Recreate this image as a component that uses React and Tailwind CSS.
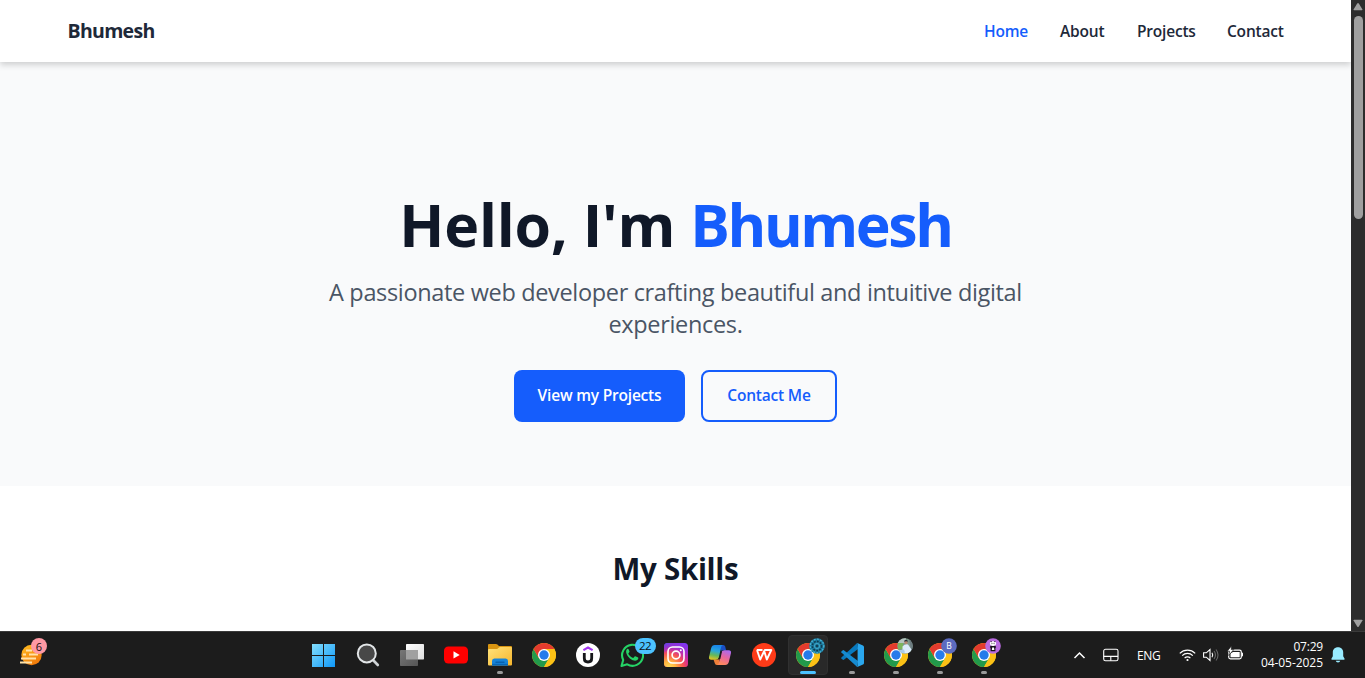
import React from "react";

const navItems = [
  { label: "Home", cls: "w-[44px] text-[#155dfc]" },
  { label: "About", cls: "w-[45px] text-[#1e2939]" },
  { label: "Projects", cls: "w-[58px] text-[#1e2939]" },
  { label: "Contact", cls: "w-[57px] text-[#1e2939]" },
];

function Navbar() {
  return (
    <header className="relative z-10 flex h-[62px] shrink-0 items-center justify-between bg-white pr-[67px] pl-[67.5px] shadow-[0_3px_6px_rgba(0,0,0,0.17)]">
      <div className="text-[19.5px] leading-7 font-bold tracking-[-0.7px] text-[#1e2939]">Bhumesh</div>
      <nav className="flex gap-8 text-[15.5px] leading-6 font-semibold tracking-[-0.2px] whitespace-nowrap">
        {navItems.map((n) => (
          <a key={n.label} className={n.cls}>{n.label}</a>
        ))}
      </nav>
    </header>
  );
}

function Hero() {
  return (
    <section className="flex h-[424px] shrink-0 flex-col items-center bg-[#f9fafb] pt-[132px] text-center">
      <h1 className="text-[59px] leading-[60px] font-bold tracking-[-0.2px] whitespace-nowrap text-[#101828]">
        Hello, I'm <span className="tracking-[-2.4px] text-[#155dfc]">Bhumesh</span>
      </h1>
      <p className="mt-[22px] text-[23.5px] leading-8 tracking-[-0.34px] whitespace-nowrap text-[#4a5565]">
        A passionate web developer crafting beautiful and intuitive digital
        <br />
        experiences.
      </p>
      <div className="mt-[30px] flex gap-4 text-[15.5px] font-semibold tracking-[-0.2px] whitespace-nowrap">
        <button className="h-[52px] w-[171px] rounded-lg bg-[#155dfc] text-white">View my Projects</button>
        <button className="h-[52px] w-[136px] rounded-lg border-2 border-[#155dfc] text-[#155dfc]">Contact Me</button>
      </div>
    </section>
  );
}

function Scrollbar() {
  return (
    <div className="flex w-[14px] shrink-0 flex-col items-center bg-[#2c2c2c]">
      <svg className="mt-[2px] h-[10px] w-[10px]" viewBox="0 0 10 10"><path d="M.5 7.5 4.2 1.6Q5 .6 5.8 1.6L9.5 7.5Q9.5 8.2 8.8 8.2H1.2Q.5 8.2 .5 7.5Z" fill="#9f9f9f" /></svg>
      <div className="mt-[4px] h-[203px] w-[9px] rounded-full bg-[#9f9f9f]" />
      <svg className="mt-auto mb-[3px] h-[10px] w-[10px]" viewBox="0 0 10 10"><path d="M.5 2.5 4.2 8.4Q5 9.4 5.8 8.4L9.5 2.5Q9.5 1.8 8.8 1.8H1.2Q.5 1.8 .5 2.5Z" fill="#9f9f9f" /></svg>
    </div>
  );
}

function Windows() {
  return (
    <svg width="24" height="24" viewBox="0 0 24 24">
      <defs><linearGradient id="win" x1="0" y1="0" x2="24" y2="24" gradientUnits="userSpaceOnUse"><stop stopColor="#86e0fd" /><stop offset="1" stopColor="#0c96f8" /></linearGradient></defs>
      <path d="M0 1h11v11H0zM12 1h11v11H12zM0 13h11v11H0zM12 13h11v11H12z" fill="url(#win)" />
    </svg>
  );
}

function Search() {
  return (
    <svg width="24" height="24" viewBox="0 0 24 24">
      <path d="m17 17 4.8 5" stroke="#cfd3d6" strokeWidth="2.6" strokeLinecap="round" />
      <circle cx="10.8" cy="10.4" r="9" fill="#484848" stroke="#e2e5e7" strokeWidth="2" />
    </svg>
  );
}

function TaskView() {
  return (
    <svg width="24" height="24" viewBox="0 0 24 24">
      <defs>
        <linearGradient id="tv1" x1="0" y1="0" x2="1" y2="1"><stop stopColor="#fff" /><stop offset="1" stopColor="#dedede" /></linearGradient>
        <linearGradient id="tv2" x1="0" y1="0" x2="1" y2="1"><stop stopColor="#777" /><stop offset="1" stopColor="#555" /></linearGradient>
      </defs>
      <rect x="6" y="1" width="18" height="15.5" rx=".7" fill="url(#tv1)" />
      <rect y="7" width="18" height="16" rx=".7" fill="url(#tv2)" />
      <path d="M6 7h12v9.5H6z" fill="#a0a0a0" />
    </svg>
  );
}

function YouTube() {
  return (
    <svg width="24" height="24" viewBox="0 0 24 24">
      <rect y="3.4" width="24" height="17" rx="4.2" fill="#f00" />
      <path d="m9.5 8.3 6.2 3.6-6.2 3.6z" fill="#fff" />
    </svg>
  );
}

function Folder() {
  return (
    <svg width="24" height="24" viewBox="0 0 24 24">
      <defs><linearGradient id="fold" x1="0" y1="0" x2="1" y2="1"><stop stopColor="#ffe37b" /><stop offset="1" stopColor="#f6b52d" /></linearGradient></defs>
      <path d="M0 2q0-1 1-1h7q.8 0 1.4.6L11 3h12q1 0 1 1v8H0z" fill="#d99511" />
      <path d="M0 7q0-1 1-1h7.5q.7 0 1.3-.5l1.5-1.2Q12 4 12.7 4H23q1 0 1 1v16.5q0 1-1 1H1q-1 0-1-1z" fill="url(#fold)" />
      <path d="M4 22.5V18q0-2.5 2.3-2.5h11.4q2.3 0 2.3 2.5v4.5z" fill="#1683d8" />
      <path d="M8 19.2h8" stroke="#0861ad" strokeWidth="1.4" strokeLinecap="round" />
      <path d="M4 20.8h16v1.7H4z" fill="#0866b6" />
    </svg>
  );
}

function Chrome({ children }) {
  return (
    <svg width="34" height="34" viewBox="-5 -5 34 34">
      <circle cx="12" cy="12" r="12" fill="#fbc116" />
      <path d="M1.61 6A12 12 0 0 0 12 24l5.2-9L12 12 6.8 15z" fill="#229a4b" />
      <path d="M22.39 6A12 12 0 0 1 12 24l5.2-9L15 6.5z" fill="#fbc116" />
      <path d="M1.61 6A12 12 0 0 1 22.39 6H12L6.8 15z" fill="#e33b2e" />
      <circle cx="12" cy="12" r="6" fill="#fff" />
      <circle cx="12" cy="12" r="4.7" fill="#267bea" />
      {children}
    </svg>
  );
}

function Udemy() {
  return (
    <svg width="24" height="24" viewBox="0 0 24 24">
      <circle cx="12" cy="12" r="12" fill="#fff" />
      <path d="M7.4 7.1 12 4.6l4.6 2.5" fill="none" stroke="#a435f0" strokeWidth="2.2" />
      <path d="M8.3 10v5.2q0 3.8 3.7 3.8t3.7-3.8V10" fill="none" stroke="#16171a" strokeWidth="2.8" />
    </svg>
  );
}

function WhatsApp() {
  return (
    <svg width="24" height="24" viewBox="0 0 24 24">
      <path d="m1.5 23 1.7-6A10.5 10.5 0 1 1 7.2 21.3z" fill="none" stroke="#25d366" strokeWidth="2.1" strokeLinejoin="round" />
      <path d="M8.7 6.4c-.5-.9-1.1-.8-1.6-.3-4 4 5.3 14.5 10.2 11 1.1-.8 1.3-2.2.8-2.5l-2.7-1.3c-.5-.2-.8 0-1.1.4l-.8 1c-.3.3-.6.3-1 .1-2-.9-3.3-2.3-4.1-3.8-.2-.4 0-.7.3-1l.7-.9c.2-.3.1-.6 0-.9z" fill="#25d366" />
    </svg>
  );
}

function Instagram() {
  return (
    <svg width="24" height="24" viewBox="0 0 24 24">
      <defs>
        <linearGradient id="ig" x1="1" y1="0" x2=".75" y2="1"><stop stopColor="#7638fa" /><stop offset=".4" stopColor="#a52ccb" /><stop offset=".75" stopColor="#d02a98" /><stop offset="1" stopColor="#e8307c" /></linearGradient>
        <radialGradient id="ig2" cx=".2" cy="1.05" r=".95"><stop stopColor="#ffe15c" /><stop offset=".3" stopColor="#ffb540" /><stop offset=".65" stopColor="#fd5949" stopOpacity=".85" /><stop offset="1" stopColor="#d6249f" stopOpacity="0" /></radialGradient>
        <linearGradient id="ig3" x1="0" y1="0" x2=".7" y2=".5"><stop stopColor="#514de8" /><stop offset=".5" stopColor="#8336ce" stopOpacity=".4" /><stop offset="1" stopColor="#a02ad0" stopOpacity="0" /></linearGradient>
      </defs>
      <rect width="24" height="24" rx="3.5" fill="url(#ig)" />
      <rect width="24" height="24" rx="3.5" fill="url(#ig2)" />
      <path d="M0 9V3.5Q0 0 3.5 0H20L0 9Z" fill="url(#ig3)" />
      <rect x="4" y="4" width="16" height="16" rx="4.5" fill="none" stroke="#fff" strokeWidth="1.6" />
      <circle cx="12" cy="12" r="3.9" fill="none" stroke="#fff" strokeWidth="1.7" />
      <circle cx="16.8" cy="7.2" r="1" fill="#fff" />
    </svg>
  );
}

function Copilot() {
  return (
    <svg width="24" height="24" viewBox="0 0 24 24">
      <defs>
        <linearGradient id="co1" x1=".3" y1="0" x2=".1" y2="1"><stop stopColor="#1a86e8" /><stop offset=".35" stopColor="#28a7dd" /><stop offset=".65" stopColor="#65b85b" /><stop offset="1" stopColor="#f5c51c" /></linearGradient>
        <linearGradient id="co2" x1=".8" y1="0" x2=".4" y2="1"><stop stopColor="#a76af5" /><stop offset=".5" stopColor="#e8669f" /><stop offset="1" stopColor="#ff8a5c" /></linearGradient>
      </defs>
      <path d="M11.500 2h3.800q1.500 0 1.900 1.500l1 4h-5.500z" fill="#1a4fc4" />
      <path d="M5.500 16.500h5.500l.5 5.500H9.200q-1.800 0-2.300-1.500z" fill="#f0803a" />
      <path d="M6.800 2H15q-1.500.3-1.900 2.200L10.900 14.200q-.6 2.600-3.400 2.600H3.200Q.6 16.800 1 14L3.200 5Q4 2 6.800 2z" fill="url(#co1)" />
      <path d="M17.200 22H9q1.500-.3 1.900-2.200L13.100 9.800q.6-2.600 3.400-2.600h4.300q2.600 0 2.200 2.800L20.800 19q-.8 3-3.600 3z" fill="url(#co2)" />
      <path d="M12.900 8.500h1.100l-1.700 7.500h-1.300z" fill="#1c1c1c" />
    </svg>
  );
}

function Wps() {
  return (
    <svg width="24" height="24" viewBox="0 0 24 24">
      <circle cx="12" cy="12" r="12" fill="#ff3b18" />
      <path d="M4.8 7h5.7M5 7l3.2 9.5L12.2 8l2.6 8.5L19.3 7h-6.5l-.6 1" fill="none" stroke="#fff" strokeWidth="1.9" strokeLinejoin="round" />
    </svg>
  );
}

function Code() {
  return (
    <svg width="24" height="24" viewBox="0 0 24 24">
      <path d="m17.2 0-15.8 14.5q-.5.5 0 1l1.4 1.2q.5.4 1 .1L18 6z" fill="#0879be" />
      <path d="M17.2 24 1.4 9.5q-.5-.5 0-1l1.4-1.2q.5-.4 1-.1L18 18z" fill="#168bd1" />
      <path d="M17.3 24q-.7.2-1.3-.4 1.6 1 1.6-1V1.4q0-2-1.6-1 .6-.6 1.3-.4L23 2.5q1 .5 1 1.5v16q0 1-1 1.500z" fill="#2aa7ee" />
    </svg>
  );
}

function TurbineBadge() {
  return (
    <g>
      <circle cx="21" cy="3" r="7.8" fill="#1c7ca0" />
      <circle cx="21" cy="3" r="6.8" fill="none" stroke="#4fb6d6" strokeWidth="1.2" strokeDasharray="1.6 1.6" />
      <circle cx="21" cy="3" r="4.6" fill="none" stroke="#103b50" strokeWidth="1.6" strokeDasharray="1.8 1.2" />
      <circle cx="21" cy="3" r="2.6" fill="none" stroke="#3fa5c8" strokeWidth="1" />
      <circle cx="21" cy="3" r="1.3" fill="#123f54" />
    </g>
  );
}

function PhotoBadge() {
  return (
    <g>
      <clipPath id="photo"><circle cx="21" cy="3" r="7.8" /></clipPath>
      <g clipPath="url(#photo)">
        <path d="M12-6h18v18H12z" fill="#7d9a8a" />
        <path d="M13-6h9v6h-9z" fill="#b4c4bf" />
        <path d="M14 0h5v6h-5z" fill="#7cb45c" />
        <path d="M25-5h6v13h-4z" fill="#6c7b80" />
        <path d="M18.500 3.5Q21 .5 24 1.5l3.500 5-2 4h-7z" fill="#dcebfb" />
        <path d="m13 7.5 7-1 1 3-7 2z" fill="#a9cbe8" />
        <circle cx="22" cy="-.5" r="1.7" fill="#b98871" />
        <path d="M20-1.200q.3-2.200 2.200-2 2 .3 1.6 2l-1.6-.6z" fill="#293038" />
      </g>
    </g>
  );
}

function LetterBadge() {
  return (
    <g>
      <circle cx="21" cy="3" r="7.8" fill="#5c6bc0" />
      <text x="21" y="6.1" textAnchor="middle" fontSize="8.5" fontFamily="Open Sans" fill="#fff">B</text>
    </g>
  );
}

function PandaBadge() {
  return (
    <g>
      <circle cx="21" cy="3" r="7.8" fill="#b96be0" />
      <path d="M19 2.500h4l1.200 1.600-.8 1V8.200h-4.800V5.100l-.8-1z" fill="#17131b" />
      <path d="M20.200 4.600h1.800l.4 2.400h-2.600z" fill="#fff" />
      <ellipse cx="21" cy=".6" rx="3.100" ry="2.300" fill="#fff" />
      <path d="M18.600-1.600l1.200.4M23.400-1.600l-1.200.4M19.500.7l.9-.3M22.500.7l-.9-.3" stroke="#17131b" strokeWidth=".9" />
    </g>
  );
}

const apps = [
  { el: <Windows /> },
  { el: <Search /> },
  { el: <TaskView /> },
  { el: <YouTube /> },
  { el: <Folder />, open: true },
  { el: <Chrome /> },
  { el: <Udemy /> },
  { el: <WhatsApp />, count: "22" },
  { el: <Instagram /> },
  { el: <Copilot /> },
  { el: <Wps /> },
  { el: <Chrome><TurbineBadge /></Chrome>, active: true },
  { el: <Code />, open: true },
  { el: <Chrome><PhotoBadge /></Chrome>, open: true },
  { el: <Chrome><LetterBadge /></Chrome>, open: true },
  { el: <Chrome><PandaBadge /></Chrome>, open: true },
];

function AppButton({ app }) {
  return (
    <div className={app.active ? "relative flex h-10 w-10 items-center justify-center rounded-[4px] border border-[#303030] bg-[#292929]" : "relative flex h-10 w-10 items-center justify-center"}>
      {app.el}
      {app.count && <span className="absolute top-[3px] left-[23px] flex h-4 w-[21px] items-center justify-center rounded-full bg-[#4cc2ff] text-[11.5px] leading-none tracking-[-0.5px] text-[#0b1216]">{app.count}</span>}
      {app.open && <span className="absolute bottom-px left-[17px] h-[3px] w-[6px] rounded-full bg-[#9a9a9a]" />}
      {app.active && <span className="absolute bottom-0 left-[11px] h-[3px] w-4 rounded-full bg-[#4cc2ff]" />}
    </div>
  );
}

function Weather() {
  return (
    <div className="relative -mt-[2px] h-8 w-8">
      <svg width="32" height="32" viewBox="0 0 32 32">
        <defs><linearGradient id="sun" x1="0" y1="0" x2=".6" y2="1"><stop stopColor="#ffbf20" /><stop offset="1" stopColor="#f17a0b" /></linearGradient></defs>
        <circle cx="15.5" cy="17" r="10.2" fill="url(#sun)" />
        <path d="M10 12.5h6M7 16.5h3M13 16.5h9M5 20.5h15M4 24.5h12" stroke="#ffe2a8" strokeWidth="1.8" />
      </svg>
      <span className="absolute top-0 left-[15px] flex h-4 w-4 items-center justify-center rounded-full bg-[#ff99a4] text-[11px] leading-none text-[#140c0e]">6</span>
    </div>
  );
}

function Tray() {
  return (
    <div className="ml-auto flex h-full items-center pr-[19px] text-white">
      <svg className="mr-[17px]" width="13" height="13" viewBox="0 0 13 13"><path d="m1.5 9 5-5 5 5" fill="none" stroke="#fff" strokeWidth="1.5" /></svg>
      <svg className="mr-[18px]" width="16" height="14" viewBox="0 0 16 14" fill="none" stroke="#fff" strokeWidth="1.1"><rect x=".7" y="1.3" width="14.3" height="11.4" rx="1.8" /><path d="M.7 8.4H15M7.8 8.4v4.3" /></svg>
      <span className="mr-[17px] w-[25px] pt-px text-[12px] tracking-[-0.3px]">ENG</span>
      <svg className="mr-[7px]" width="17" height="14" viewBox="0 0 17 14" fill="none" stroke="#fff" strokeWidth="1.2"><path d="M.8 5.3a10.8 10.8 0 0 1 15.4 0M3.2 7.7a7.4 7.4 0 0 1 10.6 0M5.6 10.1a4 4 0 0 1 5.8 0" /><circle cx="8.5" cy="12" r="1.1" fill="#fff" stroke="none" /></svg>
      <svg className="mr-[8px]" width="16" height="14" viewBox="0 0 16 14" fill="none" stroke="#fff" strokeWidth="1.1"><path d="M.6 4.8h2.7L7 1.5v11L3.3 9.2H.6zM9 4.7q1.5 2.2 0 4.6" /><path d="M11 3q3 4 0 8M13 1.5q4 5.4 0 11" stroke="#666" /></svg>
      <svg className="mr-[17px] mb-[3px]" width="17" height="15" viewBox="0 0 17 15"><rect x="1.7" y="4.2" width="12.6" height="8.6" rx="1.8" fill="none" stroke="#fff" strokeWidth="1.2" /><path d="M3.5 7.5 6 6h6.700v5.2H3.5zM15 6.6q1 0 1 1v1.8q0 1-1 1z" fill="#fff" /><path d="M4.600-.2.2 5.200h2.300L1.7 9.500 6.800 3.500H4.200z" fill="#fff" stroke="#1c1c1c" strokeWidth=".7" /></svg>
      <div className="mr-[7px] text-right text-[12px] leading-4 whitespace-nowrap">
        <div className="tracking-[-0.2px]">07:29</div>
        <div className="tracking-[-0.05px]">04-05-2025</div>
      </div>
      <svg width="16" height="18" viewBox="0 0 16 18"><path d="M8 1.2c3.2 0 5.2 2.2 5.2 5v4l1.4 2.6q.3.9-.7.9H2.1q-1 0-.7-.9l1.4-2.6v-4c0-2.8 2-5 5.2-5zM5.7 14.7h4.6q-.5 1.8-2.3 1.8t-2.3-1.8z" fill="#99ebff" /></svg>
    </div>
  );
}

function Taskbar() {
  return (
    <footer className="flex h-[47px] shrink-0 items-center border-t border-[#3a3a3a] bg-[#1c1c1c]">
      <div className="flex w-[303.5px] pl-4"><Weather /></div>
      <div className="flex gap-1">
        {apps.map((a, i) => <AppButton key={i} app={a} />)}
      </div>
      <Tray />
    </footer>
  );
}

export default function App() {
  return (
    <div className="flex h-[678px] w-[1365px] flex-col overflow-hidden bg-white font-['Open_Sans','Noto_Sans',sans-serif]">
      <div className="flex h-[631px] shrink-0">
        <main className="flex w-[1351px] flex-col overflow-hidden">
          <Navbar />
          <Hero />
          <section className="flex grow justify-center bg-white pt-[65px]">
            <h2 className="text-[29.5px] leading-9 font-bold tracking-[-0.3px] text-[#101828]">My Skills</h2>
          </section>
        </main>
        <Scrollbar />
      </div>
      <Taskbar />
    </div>
  );
}
